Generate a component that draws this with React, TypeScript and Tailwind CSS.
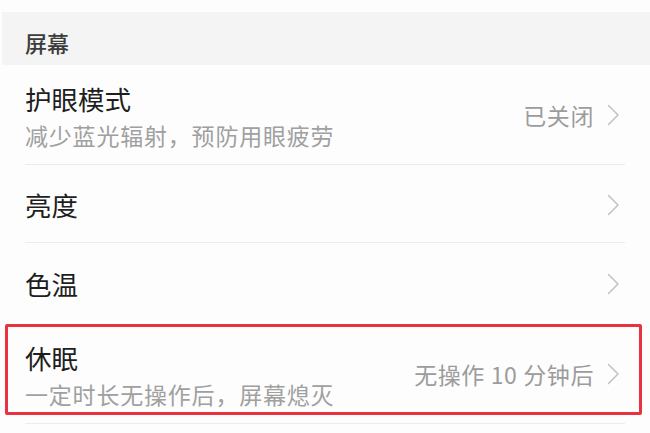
import type { ReactElement } from 'react';

const FONT = { fontFamily: '"Noto Sans CJK SC", "Noto Sans", sans-serif' };

function Chevron(): ReactElement {
	return (
		<svg width="13" height="22" viewBox="0 0 13 22" fill="none" className="shrink-0">
			<path d="M1.5 1.5 L11 11 L1.5 20.5" stroke="#c4c4c4" strokeWidth="1.6" strokeLinecap="round" strokeLinejoin="round" />
		</svg>
	);
}

interface RowProps {
	readonly title: string;
	readonly subtitle?: string;
	readonly value?: string;
	readonly className: string;
	readonly divider?: boolean;
}

function SettingRow({ title, subtitle, value, className, divider = true }: RowProps): ReactElement {
	return (
		<div className={`mx-[25px] flex items-center ${divider ? 'border-b border-[#ececec]' : ''} ${className}`}>
			<div className="flex min-w-0 flex-1 flex-col">
				<span className="text-[26.5px] leading-[30px] text-[#1e1e1e]">{title}</span>
				{subtitle ? (
					<span className="mt-[6px] text-[23px] leading-[30px] tracking-[0.8px] text-[#a0a0a0]">{subtitle}</span>
				) : null}
			</div>
			<div className={`flex items-center gap-[13px] pr-[5px] ${value ? 'mb-[4px]' : ''}`}>
				{value ? (
					<span className="text-[23px] leading-[30px] tracking-[0.6px] text-[#9c9c9c]">{value}</span>
				) : null}
				<Chevron />
			</div>
		</div>
	);
}

export default function App(): ReactElement {
	return (
		<div className="h-[433px] w-[650px] overflow-hidden bg-[#fdfdfd] pt-3" style={FONT}>
			<div className="ml-[2px] flex h-[53px] items-center bg-[#f4f4f4] pl-[23px] pt-[7px]">
				<span className="text-[22px] font-medium leading-none text-[#3c3c3c]">屏幕</span>
			</div>

			<SettingRow
				title="护眼模式"
				subtitle="减少蓝光辐射，预防用眼疲劳"
				value="已关闭"
				className="h-[100px] pt-[4px]"
			/>
			<SettingRow title="亮度" className="h-[78px] pt-[2px]" />
			<SettingRow title="色温" className="h-[81px]" divider={false} />

			<div className="relative">
				<SettingRow
					title="休眠"
					subtitle="一定时长无操作后，屏幕熄灭"
					value="无操作 10 分钟后"
					className="h-[100px] pt-[4px]"
				/>
				<div className="pointer-events-none absolute left-[5px] right-[8px] top-0 h-[91px] rounded-[2px] border-[3px] border-[#e8323f]" />
			</div>
		</div>
	);
}
